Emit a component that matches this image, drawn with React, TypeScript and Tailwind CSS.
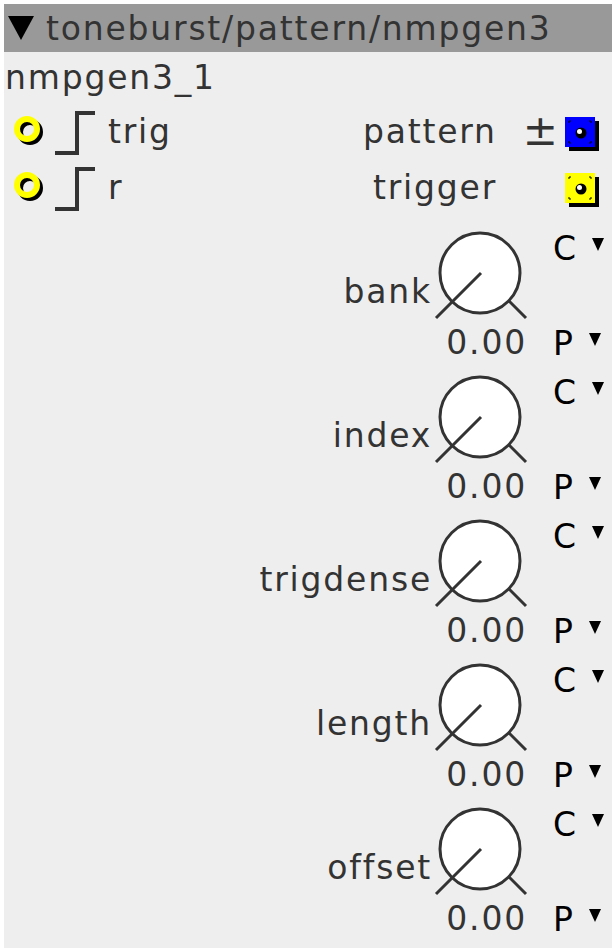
import React from "react";

const knobs = ["bank", "index", "trigdense", "length", "offset"];

const Tri = ({ w, h }: { w: number; h: number }) => (
  <svg width={w} height={h} viewBox={`0 0 ${w} ${h}`} className="shrink-0">
    <polygon points={`0,0 ${w},0 ${w / 2},${h}`} fill="#000" />
  </svg>
);

const Inlet = () => (
  <svg width="34" height="34" viewBox="0 0 34 34" className="shrink-0">
    <circle cx="17" cy="17" r="10" fill="none" stroke="#000" strokeWidth="6" />
    <circle cx="14" cy="14" r="10" fill="none" stroke="#ffff00" strokeWidth="6" />
  </svg>
);

const Step = () => (
  <svg width="44" height="50" viewBox="0 0 44 50" className="shrink-0">
    <path d="M2 46 H24 V6 H42" fill="none" stroke="#333" strokeWidth="4" />
  </svg>
);

const Outlet = ({ color }: { color: string }) => (
  <svg width="36" height="36" viewBox="0 0 36 36" className="shrink-0 mt-[6px]">
    <rect x="4" y="4" width="30" height="30" fill="#000" />
    <rect x="0" y="0" width="30" height="30" fill={color} />
    <circle cx="16" cy="16" r="5.5" fill="#000" />
    <circle cx="14.5" cy="14.5" r="2.5" fill="#fff" />
    <path d="M4 6 V4 H6 M24 4 H26 V6 M26 24 V26 H24 M6 26 H4 V24" fill="none" stroke="#000" strokeWidth="1" />
  </svg>
);

const Knob = () => (
  <svg width="100" height="92" viewBox="0 0 100 92" className="shrink-0">
    <circle cx="48" cy="42" r="40" fill="#fff" stroke="#333" strokeWidth="3" />
    <line x1="49" y1="42" x2="4" y2="87" stroke="#333" strokeWidth="3" />
    <line x1="77" y1="70" x2="94" y2="87" stroke="#333" strokeWidth="3" />
  </svg>
);

const KnobRow = ({ label }: { label: string }) => (
  <div className="flex justify-end h-[144px]">
    <div className="flex flex-col items-end">
      <div className="flex items-end">
        <span className="leading-[40px] mb-[11px]">{label}</span>
        <Knob />
      </div>
      <span className="mr-[5px] leading-[40px]">0.00</span>
    </div>
    <div className="flex flex-col w-[80px] pl-[21px] text-black">
      <div className="flex items-start leading-[40px] -mt-[2px] h-[40px]">
        <span>C</span>
        <span className="ml-[14px] mt-[9px]">
          <Tri w={12} h={13} />
        </span>
      </div>
      <div className="flex items-start leading-[40px] mt-[55px] h-[40px]">
        <span>P</span>
        <span className="ml-[14px] mt-[9px]">
          <Tri w={12} h={13} />
        </span>
      </div>
    </div>
  </div>
);

export default function App() {
  return (
    <div className="w-[616px] h-[952px] bg-white p-[4px] font-['DejaVu_Sans',sans-serif] text-[33px] tracking-[1.8px] text-[#333]">
      <div className="w-[608px] h-[944px] bg-[#eeeeee] overflow-hidden">
        <div className="h-[48px] bg-[#999999] flex items-center pl-[4px] leading-none">
          <Tri w={26} h={24} />
          <span className="ml-[12px]">toneburst/pattern/nmpgen3</span>
        </div>
        <div className="h-[52px] flex items-center pl-[1px]">nmpgen3_1</div>
        <div className="flex flex-col">
          <div className="flex items-center h-[56px]">
            <div className="flex items-center flex-1 pl-[9px]">
              <Inlet />
              <span className="ml-[6px]">
                <Step />
              </span>
              <span className="ml-[11px]">trig</span>
            </div>
            <div className="flex items-center pr-[11px]">
              <span>pattern</span>
              <span className="ml-[26px] mr-[7px] text-[42px] leading-none tracking-normal -mt-[2px]">±</span>
              <Outlet color="#0000ff" />
            </div>
          </div>
          <div className="flex items-center h-[56px]">
            <div className="flex items-center flex-1 pl-[9px]">
              <Inlet />
              <span className="ml-[6px]">
                <Step />
              </span>
              <span className="ml-[11px]">r</span>
            </div>
            <div className="flex items-center pr-[11px]">
              <span className="mr-[68px]">trigger</span>
              <Outlet color="#ffff00" />
            </div>
          </div>
        </div>
        <div className="mt-[15px]">
          {knobs.map((k) => (
            <KnobRow key={k} label={k} />
          ))}
        </div>
      </div>
    </div>
  );
}
